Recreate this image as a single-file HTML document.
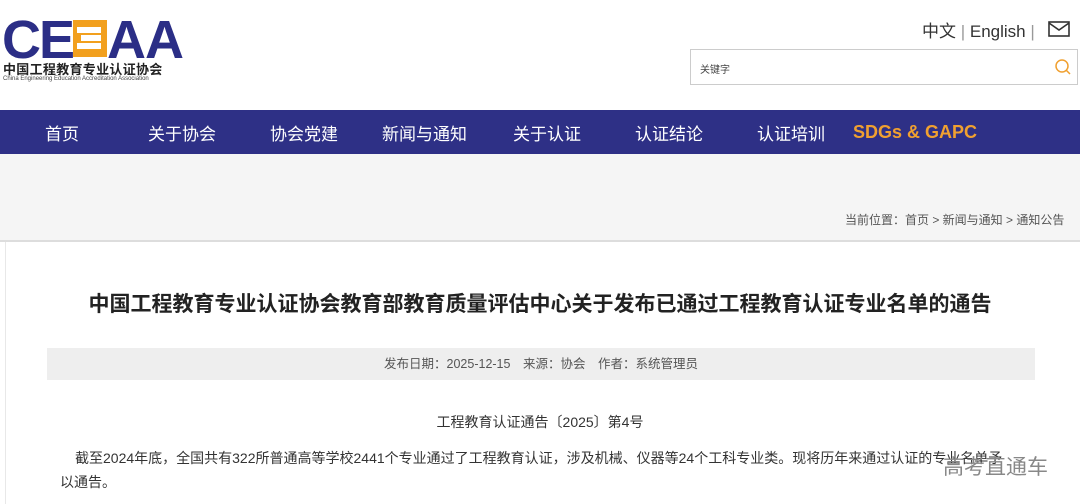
<!DOCTYPE html>
<html><head><meta charset="utf-8"><style>
body{margin:0;width:1080px;height:504px;overflow:hidden;background:#fff;font-family:"Liberation Sans","Noto Sans CJK SC",sans-serif;position:relative}
.a{position:absolute}
.nav{top:110px;left:0;width:1080px;height:44px;background:#2e3086}
.nav span{position:absolute;top:10px;color:#fff;font-size:17px;white-space:nowrap}
</style></head><body>
<div class="a" style="left:2px;top:13px;font:900 54px 'Liberation Sans',sans-serif;color:#2b2e86;letter-spacing:-2px;line-height:54px">CE</div>
<div class="a" style="left:73px;top:20px;width:34px;height:37px;background:#f2a01e"></div>
<div class="a" style="left:77px;top:27px;width:24px;height:6px;background:#fff"></div>
<div class="a" style="left:81px;top:35px;width:20px;height:6px;background:#fff"></div>
<div class="a" style="left:77px;top:43px;width:24px;height:6px;background:#fff"></div>
<div class="a" style="left:107px;top:13px;font:900 54px 'Liberation Sans',sans-serif;color:#2b2e86;letter-spacing:-1px;line-height:54px">AA</div>
<div class="a" style="left:3px;top:59px;font-size:13px;font-weight:bold;color:#222;letter-spacing:0.3px">中国工程教育专业认证协会</div>
<div class="a" style="left:3px;top:76px;font-size:6px;color:#444;white-space:nowrap">China Engineering Education Accreditation Association</div>

<div class="a" style="left:922px;top:17px;font-size:17px;color:#333;white-space:nowrap">中文 <span style="color:#999">|</span> English <span style="color:#999">|</span></div>
<svg class="a" style="left:1048px;top:21px" width="22" height="16" viewBox="0 0 22 16"><rect x="1" y="1" width="20" height="14" fill="none" stroke="#333" stroke-width="1.6"/><path d="M1 2 L11 9 L21 2" fill="none" stroke="#333" stroke-width="1.6"/></svg>
<div class="a" style="left:690px;top:49px;width:388px;height:36px;border:1px solid #ccc;box-sizing:border-box"></div>
<div class="a" style="left:700px;top:61px;font-size:10px;color:#444">关键字</div>
<svg class="a" style="left:1054px;top:58px" width="18" height="18" viewBox="0 0 18 18"><circle cx="8" cy="8" r="6" fill="none" stroke="#f0a030" stroke-width="1.5"/><path d="M12.5 12.5 L16 16" stroke="#f0a030" stroke-width="1.5"/></svg>

<div class="a nav">
<span style="left:45px">首页</span><span style="left:148px">关于协会</span><span style="left:270px">协会党建</span><span style="left:382px">新闻与通知</span><span style="left:513px">关于认证</span><span style="left:635px">认证结论</span><span style="left:757px">认证培训</span><span style="left:853px;color:#f0a030;font-size:18px;top:12px;font-weight:600">SDGs &amp; GAPC</span>
</div>
<div class="a" style="top:154px;left:0;width:1080px;height:86px;background:#f5f5f5;border-bottom:2px solid #ddd"></div>
<div class="a" style="left:845px;top:211px;font-size:12px;color:#555;white-space:nowrap">当前位置：首页 &gt; 新闻与通知 &gt; 通知公告</div>
<div class="a" style="left:5px;top:242px;width:1px;height:262px;background:#e8e8e8"></div>
<div class="a" style="left:0;width:1080px;top:288px;text-align:center;font-size:21px;font-weight:bold;color:#222;white-space:nowrap">中国工程教育专业认证协会教育部教育质量评估中心关于发布已通过工程教育认证专业名单的通告</div>
<div class="a" style="left:47px;top:348px;width:988px;height:32px;background:#eeeeee;text-align:center;line-height:32px;font-size:12.5px;color:#555">发布日期：2025-12-15　来源：协会　作者：系统管理员</div>
<div class="a" style="left:0;width:1080px;top:412px;text-align:center;font-size:14px;color:#333">工程教育认证通告〔2025〕第4号</div>
<div class="a" style="left:60px;top:446px;width:965px;font-size:14px;color:#333;line-height:24px;text-indent:15px">截至2024年底，全国共有322所普通高等学校2441个专业通过了工程教育认证，涉及机械、仪器等24个工科专业类。现将历年来通过认证的专业名单予<br>以通告。</div>
<div class="a" style="left:943px;top:451px;font-size:21px;color:#888">高考直通车</div>
</body></html>
